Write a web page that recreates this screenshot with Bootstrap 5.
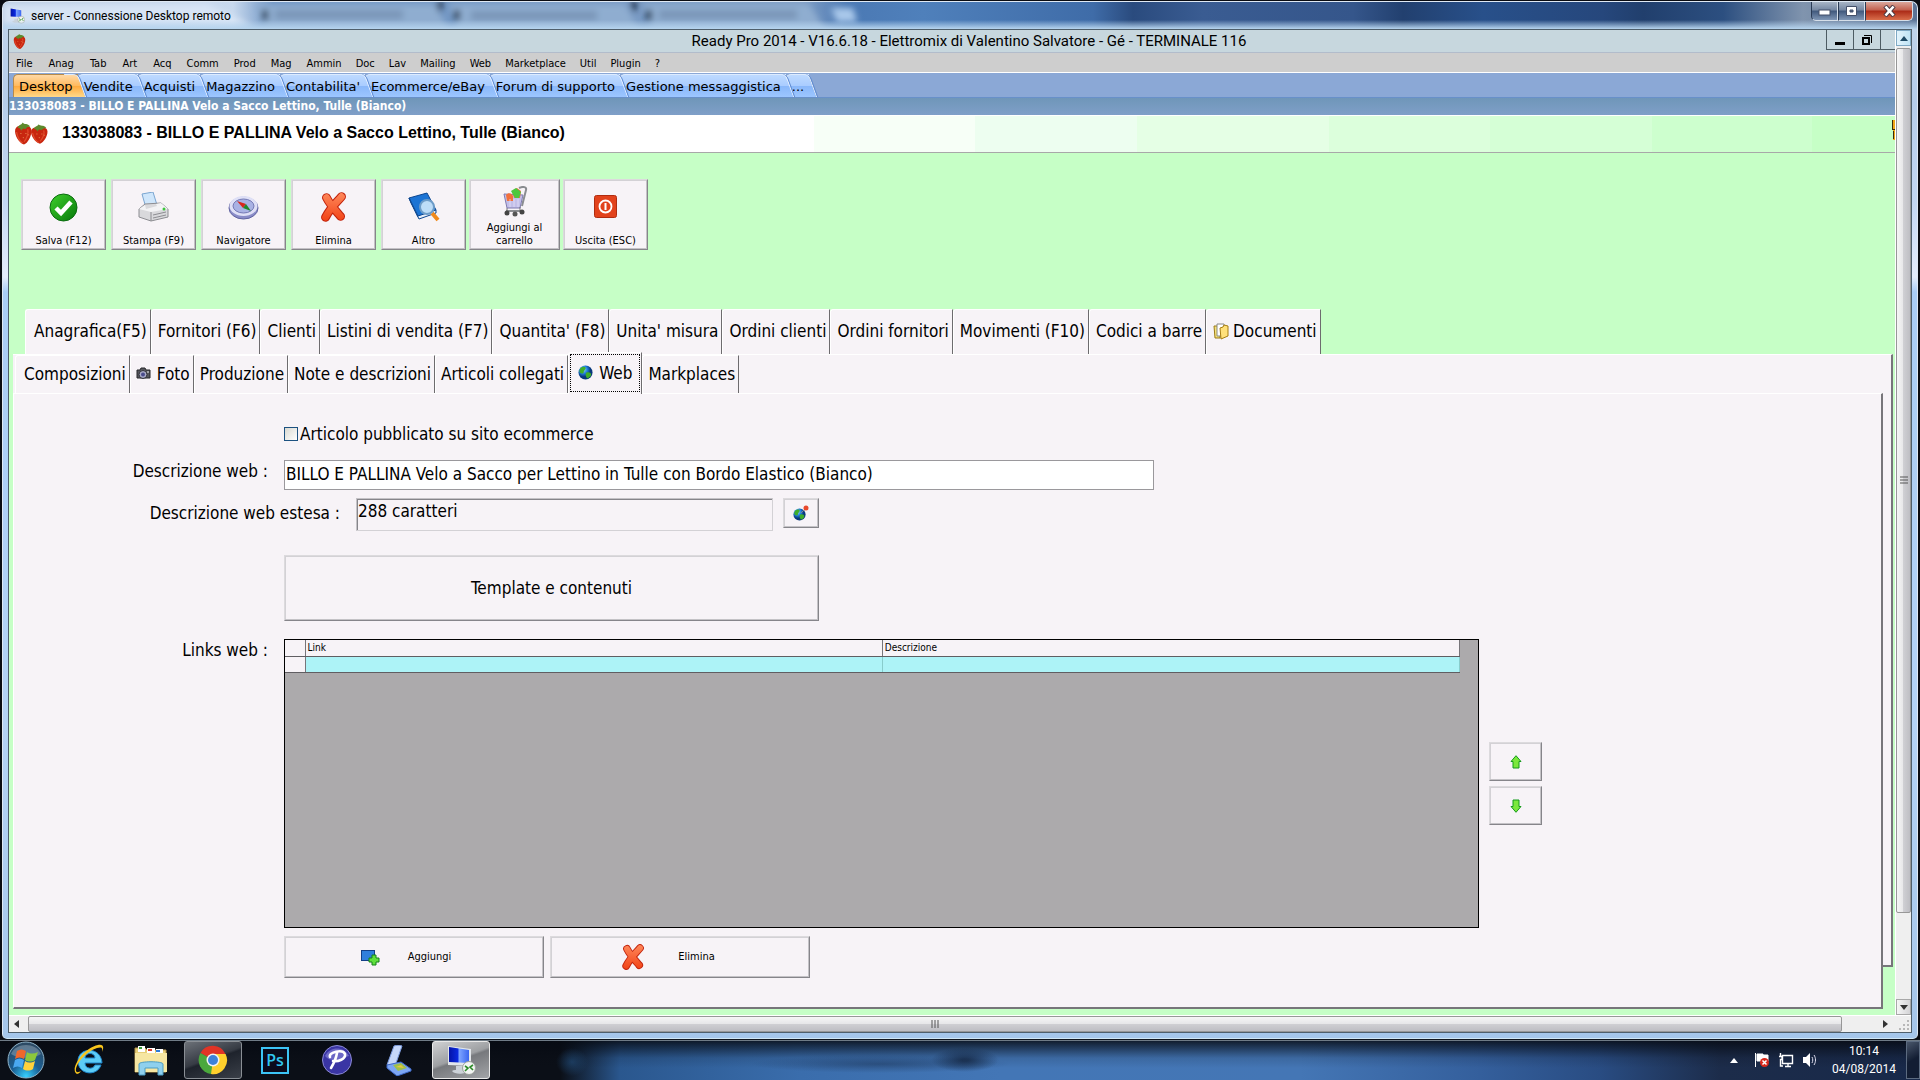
<!DOCTYPE html>
<html lang="it">
<head>
<meta charset="utf-8">
<meta name="viewport" content="width=device-width, initial-scale=1">
<title>server - Connessione Desktop remoto</title>
<link href="https://cdn.jsdelivr.net/npm/bootstrap@5.3.0/dist/css/bootstrap.min.css" rel="stylesheet">
<style>
:root{--tahoma:"DejaVu Sans Condensed","DejaVu Sans",sans-serif;--segoe:Roboto,"Open Sans",sans-serif;--face:#f7f3f7;--mint:#c6ffc6}
body{background:#0a0c12;font-family:var(--tahoma);font-size:17px;line-height:22px;color:#000;overflow:hidden}
button{font-family:inherit;color:#000}
svg{display:block;flex:none}
a{color:#000;text-decoration:none}

/* remote desktop window */
.rd-window{margin:1px 2px 0;padding:0 5px 5px;border:1px solid #dfe9f4;border-bottom-color:#cfe6f5;border-radius:7px 7px 5px 5px;background:linear-gradient(#c2d4ea 0,#b5cdea 100px,#c3d7f3 200px,#e4edfb 275px,#a9cdf6 290px,#b4d3f5 70%,#a5c6ea);min-height:0}
.rd-title{position:relative;height:27px;margin:0 -5px;padding-left:6px;border-radius:6px 6px 0 0;overflow:hidden;font-family:var(--segoe);font-size:12px;background:linear-gradient(90deg,#b9cbe2 0,#c8d9ee 230px,#6d94c4 270px,#7e9dc4 800px,#4b79b4 845px,#4f80bb 920px,#3f6ca8 1090px,#2a4b7e 1130px,#3a5c92 1200px,#35568b 1350px,#22406f 1400px,#28508a 1480px,#26477c 1600px,#213f6d 1640px,#2c4f80 1720px,#8094ae 1800px,#5b7396 100%)}
.rd-title::after{content:"";position:absolute;left:0;right:0;bottom:0;height:9px;background:linear-gradient(transparent,#b7d5ef)}
.rd-blur{position:absolute;left:0;top:0;width:100%;height:100%}
.rd-caption{position:relative;z-index:2;margin-left:6px}
.rd-buttons{position:absolute;top:0;right:4px;z-index:2}
.rd-buttons button{width:27px;height:19px;padding:0;border:1px solid #d6dfe9;border-top:0;border-left-color:#2a3b55;background:linear-gradient(#a7b4c6,#7487a2 45%,#40587c 50%,#7f96b5)}
.rd-buttons button:first-child{border-bottom-left-radius:5px}
.rd-buttons button:last-child{width:48px;border-bottom-right-radius:5px;background:linear-gradient(#dba79b,#c2604e 45%,#ab2a17 50%,#d96e4b)}
.rd-client{border:1px solid #4f5f6b;min-height:0;min-width:0}
.client-row{min-height:0}

/* application */
.app-title{height:23px;padding-left:34px;background:#c7d7de;border-bottom:1px solid #b2bccb;font-family:var(--segoe);position:relative}
.app-title h1{font-size:15px;line-height:22px;margin:0;font-weight:400}
.app-title .mdi{position:absolute;right:0;top:0}
.mdi button{width:27px;height:20px;padding:0;border:1px solid #4d5b62;border-width:0 0 1px 1px;background:#c7d7de}
.mdi button:last-child{width:15px}
.app-menu{height:20px;background:#cecece;border-bottom:1px solid #fff;font-size:11px;line-height:21px}
.app-menu a{padding:0 8px 0 7px}
.app-menu a:nth-child(-n+4){padding-right:9px}
.app-menu a:nth-child(n+9){padding-right:7px}
.area-tabs{height:25px;background:#8ba8d6;border-bottom:1px solid #6890c9;padding-left:4px;font-family:"DejaVu Sans",sans-serif;font-size:13px}
.area-tabs a{position:relative;height:23px;margin-top:1px;line-height:23px;padding:0 5px;border-left:1px solid #dcebff;border-top:1px solid #dcebff;border-top-left-radius:5px;background:linear-gradient(#bedaff,#a9ccff 50%,#8ab8fa 52%,#9cc6ff)}
.area-tabs a::after{content:"";position:absolute;z-index:-1;top:-1px;bottom:0;right:-4px;width:14px;border-top:1px solid #dcebff;border-right:1px solid #e8f2ff;box-shadow:1px 0 #5f8bd0;border-top-right-radius:5px;transform:skewX(20deg);background:inherit}
.area-tabs a:nth-child(1){z-index:9}.area-tabs a:nth-child(2){z-index:8}.area-tabs a:nth-child(3){z-index:7}.area-tabs a:nth-child(4){z-index:6}.area-tabs a:nth-child(5){z-index:5}.area-tabs a:nth-child(6){z-index:4}.area-tabs a:nth-child(7){z-index:3}.area-tabs a:nth-child(8){z-index:2}.area-tabs a:nth-child(9){z-index:1}
.area-tabs a.active{background:linear-gradient(#ffd9a6,#ffb95c 50%,#ffab3e 52%,#ffd98a);border-color:#b78a4a}
.doc-strip{height:17px;background:linear-gradient(#6f96b9,#7f9fc8);color:#fff;font-weight:700;font-size:12px;line-height:16px}
.doc-head{height:38px;border-top:1px solid #fff;border-bottom:1px solid #a8a8a8;background:linear-gradient(90deg,#fff 42.7%,#f7fff7 42.7% 51.2%,#edfef0 51.2% 59.8%,#e5ffe5 59.8% 70%,#dcffdc 70% 78.5%,#d5ffd6 78.5% 87.1%,#cdffce 87.1% 95.6%,#c6ffc6 95.6%);font-family:"Liberation Sans",Arial,sans-serif}
.doc-head h2{font-size:16px;line-height:20px;margin:0 0 2px;font-weight:700}
.work{background:var(--mint);padding-left:4px;min-height:0}
.bevel{background:var(--face);border:1px solid;border-color:#dcdadd #86858a #86858a #dcdadd;box-shadow:inset -1px -1px #c4c2c6,inset 1px 1px #d3d1d5;border-radius:0;padding:0}
.bevel:active{background:#ece8ec}
.tools{padding:26px 0 0 8px;gap:5px}
.tools .bevel{width:85px;height:71px;font-size:11px;line-height:13px;padding-bottom:2px}
.tools .bevel svg{margin-bottom:12px}
.tools .bevel.wide{width:91px;margin:0 -2px}
.tools .bevel.wide svg{margin-bottom:4px}
.tab-row a{display:flex;align-items:center;padding:0 3px 2px 6px;border-left:1px solid #fff;border-top:1px solid #fff;border-right:1px solid #6d6b6e;border-top-left-radius:3px;background:var(--face);white-space:nowrap}
.tab-row a:first-child{padding-left:8px}
.tabs-top{margin:59px 0 0 12px}
.tabs-top a{height:45px}
.page-outer{margin:0 2px 48px 0;background:var(--face);border-top:1px solid #fff;border-right:2px solid #77757a;border-bottom:2px solid #77757a;min-height:0}
.tabs-sub{padding-left:2px;height:38px}
.tabs-sub a{height:38px;gap:6px;padding-left:5px}
.tabs-sub a.active{position:relative;margin-top:-3px;height:42px;outline:1px dotted #000;outline-offset:-3px;padding:0 9px 2px 9px}
.page-inner{background:var(--face);margin:0 8px -44px 0;border-top:1px solid #fff;border-left:1px solid #fff;border-right:2px solid #77757a;border-bottom:2px solid #77757a;padding-top:26px}
.pub-row{height:28px}
.lab{flex:none;width:270px;padding-right:16px;text-align:right}
.lab.far{width:342px}
.tick{appearance:none;width:14px;height:14px;margin:0 2px 0 0;border:1px solid #1c5180;background:linear-gradient(135deg,#d9d9d2,#fff);border-radius:0}
.tick:checked{background:#1c5180}
.field{border-radius:0;font-family:inherit;font-size:17px;line-height:22px;color:#000}
.field-web{flex:0 1 870px;min-width:0;border:1px solid #9a989c;background:#fff;height:30px;padding:0 1px 2px}
.field-ext{flex:0 1 417px;min-width:0;height:33px;background:var(--face);border:1px solid;border-color:#c4c2c6 #d3d1d5 #d3d1d5 #c4c2c6;box-shadow:inset 1px 1px #86858a;padding:0 1px 7px}
.web-btn{width:36px;height:30px;margin-left:10px}
.template-row{margin-top:24px}
.links-row{margin-top:18px}
.gridbox{flex:0 1 1195px;height:289px;border:1px solid #000;background:#acaaac}
.gridbox table{width:calc(100% - 18px);table-layout:fixed;font-size:10px;line-height:14px;border-collapse:collapse}
.gridbox th,.gridbox td{height:16px;padding:0 2px;border-right:1px solid #77757a;border-bottom:1px solid #605e62;font-weight:400;text-align:left;background:var(--face)}
.gridbox .rowhead{width:20px}
.gridbox td.cellx{background:#adf3f7;border-right-color:#8cc}
.movers{margin:103px 0 0 10px;gap:5px}
.movers .bevel{width:53px;height:39px}
.big{width:535px;height:66px}
.act{width:260px;height:42px;font-size:11px;margin-right:6px}

/* scroll bars */
.vscroll{width:16px;background:#efefef;border-left:1px solid #fff}
.vscroll button,.hscroll button{border:0;padding:0;background:none;width:15px;height:16px}
.vscroll .hot{border:1px solid #7fa9c4;background:linear-gradient(90deg,#e3f4fc,#bfe3f4)}
.vscroll .low{border:1px solid #a8a8a8;background:linear-gradient(90deg,#f6f6f6,#d4d4d6)}
.vthumb{flex:864 1 0;margin-top:2px;border:1px solid #979797;border-radius:2px;background:linear-gradient(90deg,#f6f6f6,#e6e6e8 50%,#cfcfd3 50%,#bebec3)}
.vrest{flex:86 1 0}
.hscroll{height:17px;background:#efefef;border-top:1px solid #fff}
.hthumb{flex:1815 1 0;border:1px solid #979797;border-radius:2px;background:linear-gradient(#f6f6f6,#e6e6e8 50%,#cfcfd3 50%,#bebec3)}
.hrest{flex:36 1 0}

/* taskbar */
.taskbar{height:41px;border-top:1px solid #10151c;background:radial-gradient(ellipse 34px 12px at 965px 20px,#0d1a30aa 10%,transparent),radial-gradient(ellipse 130px 9px at 880px 24px,#1c355988,transparent),radial-gradient(ellipse 16px 14px at 572px 22px,#23507f99,transparent),linear-gradient(#060a12dd,#060a1222 45%,transparent 70%),linear-gradient(90deg,#0b0f17 560px,#2a578e 620px,#3a6dac 800px,#4376b6 1000px,#4476b5 1300px,#345f9c 1480px,#294c82 1600px,#1c2c4a 1720px,#18294a)}
.taskbar nav{border-top:1px solid #6f7b86}
.taskbar a,.taskbar button{display:flex;align-items:center;justify-content:center}
.tb{width:62px;height:38px}
.tb-start{width:60px}
.tb-on{width:58px;margin:0 2px;border:1px solid #8a8f95;border-radius:3px;background:linear-gradient(160deg,#6c7178,#363b44 45%,#1e232c 50%,#3a3f48)}
.tb-now{background:linear-gradient(160deg,#d0d1d3,#9d9fa2 45%,#77797d 50%,#a2a4a7);border-color:#e9e9e9}
.ps-logo{width:28px;height:27px;border:2px solid #3cc4f6;background:#0b0b1c;color:#31c5f0;font:600 16px/22px "Open Sans",sans-serif;text-align:center}
.clock{width:84px;font-family:var(--segoe);font-size:12px;line-height:18px;color:#fff;text-align:center}
.peek{width:14px;height:38px;padding:0;border:1px solid #5c6b80;background:linear-gradient(150deg,#49566a,#121d33 50%)}
</style>
</head>
<body class="d-flex flex-column vh-100">
<svg width="0" height="0" class="position-absolute" aria-hidden="true">
  <defs>
    <linearGradient id="gRed" gradientUnits="userSpaceOnUse" x1="0" y1="0" x2="0" y2="34"><stop offset="0" stop-color="#ff8a5c"/><stop offset="1" stop-color="#f03c10"/></linearGradient>
    <linearGradient id="gGreen" x1="0" y1="0" x2="1" y2="1"><stop offset="0" stop-color="#3fd02c"/><stop offset="1" stop-color="#06780a"/></linearGradient>
    <radialGradient id="gGlobe" cx=".35" cy=".3"><stop offset="0" stop-color="#8fd8ff"/><stop offset=".6" stop-color="#1c78d8"/><stop offset="1" stop-color="#08387c"/></radialGradient>
    <linearGradient id="gScreen" x1="0" y1="0" x2="1" y2="0"><stop offset="0" stop-color="#0414a8"/><stop offset=".45" stop-color="#0a2ae0"/><stop offset=".5" stop-color="#7fa6ff"/><stop offset="1" stop-color="#3a66f0"/></linearGradient>
    <symbol id="berry" viewBox="0 0 16 18" preserveAspectRatio="none"><path d="M1 6c1-3 5-3 7-2 3-1 6 0 6 3 0 4-3 9-6 10C4 16 0 10 1 6z" fill="#c8260f"/><path d="M2 8c1 4 3 7 5 8M11 6c1 3-1 7-3 9" stroke="#e04a2c" fill="none"/><path d="M3 5c1-3 3-2 4-4 1 2 4 0 6 3-2 0-3 1-4 2-1-1-2-1-3 1-1-2-2-2-3-2z" fill="#5d8a2c"/><path d="M5 9h1M9 9h1M7 12h1M11 10h1" stroke="#e88a50" stroke-width=".6"/></symbol>
    <symbol id="cross" viewBox="0 0 30 32"><g fill="none" stroke-linecap="round"><path d="M7 6c4 8 9 13 15 20M23 5C17 12 11 17 6 27" stroke="#c2230c" stroke-width="9.500"/><path d="M7 6c4 8 9 13 15 20M23 5C17 12 11 17 6 27" stroke="url(#gRed)" stroke-width="7.200"/></g></symbol>
    <symbol id="globe" viewBox="0 0 16 16"><circle cx="8" cy="8" r="7.5" fill="url(#gGlobe)"/><path d="M3 3c3-2 6-1 5 1s-2 2-2 4-3 1-4 0 0-4 1-5zM9 8c2-1 5 0 5 2s-3 4-4 4-3-4-1-6z" fill="#3fae2a"/></symbol>
    <symbol id="remote" viewBox="0 0 30 30"><path d="M2 1 25 4v17L2 20z" fill="#e2e6ea"/><path d="M3 2 23 5v13L3 17z" fill="url(#gScreen)"/><path d="M10 21h7v4h-7zM6 26c3-2 12-2 15 0s-12 5-15 0z" fill="#ccd2d8"/><circle cx="23" cy="23" r="6.5" fill="#f2f4f2" stroke="#9aa09a"/><path d="m19 21 3 2-3 3M27 20l-3 2 3 3" stroke="#2b8a26" stroke-width="1.6" fill="none"/></symbol>
  </defs>
</svg>

<main class="rd-window d-flex flex-column flex-grow-1">
  <header class="rd-title d-flex align-items-center flex-shrink-0">
    <svg class="rd-blur" preserveAspectRatio="none" aria-hidden="true"><defs><filter id="soft" x="-20%" y="-50%" width="140%" height="200%"><feGaussianBlur stdDeviation="3"/></filter></defs>
      <g filter="url(#soft)"><path d="M0 2h205l45 22H0z" fill="#dce8f7" opacity=".8"/><path d="M252 2h180l14 26H262zM446 2h176l14 26H456zM640 2h166l16 26H650z" fill="#8fadd0"/><path d="M433 0h8l-4 12zM627 0h8l-4 12z" fill="#15253c"/><path d="M276 12h120v1H276zM472 13h118v1H472zM660 12h130v1H660z" stroke="#647f9f" stroke-width="8" opacity=".5"/><path d="M262 8v10M454 8v10M646 8v10" stroke="#1f3450" stroke-width="6"/><path d="M828 6h22l4 14h-20z" fill="#a9c8ea"/></g></svg>
    <svg class="position-relative" width="16" height="17"><use href="#remote"/></svg>
    <span class="rd-caption">server - Connessione Desktop remoto</span>
    <div class="rd-buttons d-flex">
      <button type="button" aria-label="Riduci a icona"><svg class="mx-auto" width="13" height="12"><rect x="1" y="5" width="11" height="5" fill="#fff" stroke="#44506a"/></svg></button>
      <button type="button" aria-label="Ingrandisci"><svg class="mx-auto" width="13" height="12"><path d="M1.500 1.500h10v9h-10zM5 5h3v2H5z" fill="#fff" fill-rule="evenodd" stroke="#44506a"/></svg></button>
      <button type="button" aria-label="Chiudi"><svg class="mx-auto" width="13" height="12"><path d="m2 1 4.500 5L11 1M2 11l4.500-5 4.500 5" stroke="#4b3a44" stroke-width="4.500" fill="none"/><path d="m2.500 1.500 4 4.500 4-4.500M2.500 10.500l4-4.500 4 4.500" stroke="#fff" stroke-width="2.600" fill="none"/></svg></button>
    </div>
  </header>

  <div class="rd-client d-flex flex-column flex-grow-1">
    <div class="client-row d-flex flex-grow-1">
      <div class="d-flex flex-column flex-grow-1 overflow-hidden">
        <div class="app-title d-flex align-items-center justify-content-center flex-shrink-0">
          <svg class="position-absolute start-0 ms-1" width="14" height="17"><use href="#berry"/></svg>
          <h1>Ready Pro 2014 - V16.6.18 - Elettromix di Valentino Salvatore - Gé - TERMINALE 116</h1>
          <div class="mdi d-flex">
            <button type="button" aria-label="Riduci"><svg class="mx-auto" width="12" height="12"><path d="M1 8h10v3H1z"/></svg></button>
            <button type="button" aria-label="Ripristina"><svg class="mx-auto" width="12" height="12"><path d="M2 4h6v6H2z" fill="none" stroke="#000" stroke-width="2"/><path d="M3 1.500h7.500V9" fill="none" stroke="#000"/></svg></button>
            <button type="button" aria-label="Chiudi scheda"></button>
          </div>
        </div>
        <nav class="app-menu d-flex flex-shrink-0" aria-label="Menu">
          <a href="#">File</a><a href="#">Anag</a><a href="#">Tab</a><a href="#">Art</a><a href="#">Acq</a><a href="#">Comm</a><a href="#">Prod</a><a href="#">Mag</a><a href="#">Ammin</a><a href="#">Doc</a><a href="#">Lav</a><a href="#">Mailing</a><a href="#">Web</a><a href="#">Marketplace</a><a href="#">Util</a><a href="#">Plugin</a><a href="#">?</a>
        </nav>
        <nav class="area-tabs d-flex flex-shrink-0" aria-label="Aree">
          <a class="active" href="#">Desktop</a><a href="#">Vendite</a><a href="#">Acquisti</a><a href="#">Magazzino</a><a href="#">Contabilita'</a><a href="#">Ecommerce/eBay</a><a href="#">Forum di supporto</a><a href="#">Gestione messaggistica</a><a href="#">...</a>
        </nav>
        <div class="doc-strip flex-shrink-0">133038083 - BILLO E PALLINA Velo a Sacco Lettino, Tulle (Bianco)</div>
        <div class="doc-head d-flex align-items-center flex-shrink-0">
          <svg class="ms-1" width="37" height="26"><use href="#berry" x="1" y="0" width="20" height="25"/><use href="#berry" x="17" y="2" width="20" height="22"/></svg>
          <h2 class="ms-2 ps-1 flex-grow-1">133038083 - BILLO E PALLINA Velo a Sacco Lettino, Tulle (Bianco)</h2>
          <svg class="mb-2" width="3" height="22"><path d="M0 1h3v20H1V11H0z" fill="#f0a818"/><path d="M.5 1v9M1.500 12v8M0 10.500h3" stroke="#3a2c08"/></svg>
        </div>

        <section class="work d-flex flex-column flex-grow-1">
          <div class="tools d-flex flex-shrink-0">
            <button type="button" class="bevel d-flex flex-column align-items-center justify-content-end"><svg width="29" height="29"><circle cx="14.500" cy="14.500" r="13.500" fill="url(#gGreen)" stroke="#0b6b10"/><path d="m7 15 5 5 10-11" stroke="#fff" stroke-width="4.500" fill="none"/></svg>Salva (F12)</button>
            <button type="button" class="bevel d-flex flex-column align-items-center justify-content-end"><svg width="31" height="30"><path d="m4 2 11-2 4 13-11 3z" fill="#cfe6fb" stroke="#7aa5d0"/><path d="m1 17 6-5 16-1 7 6v8l-17 4-12-4z" fill="#d9d9dc" stroke="#8d8d92"/><path d="m1 17 12 3 17-3-7-6-5 1 1 2-11 3-1-4z" fill="#f3f3f5"/><path d="M13 20v9M15 23l13-3M15 26l13-3" stroke="#8d8d92"/><circle cx="26" cy="17" r="1.500" fill="#3cc43c"/></svg>Stampa (F9)</button>
            <button type="button" class="bevel d-flex flex-column align-items-center justify-content-end"><svg width="31" height="29"><ellipse cx="15.500" cy="15" rx="14.500" ry="11" fill="#8a8cc8" stroke="#6063a0"/><ellipse cx="15.500" cy="13" rx="14" ry="10" fill="#dfe0f6"/><ellipse cx="15.500" cy="13" rx="10.500" ry="7" fill="#a9b2e4" stroke="#7478b4"/><path d="m9 8 9 3-3 4z" fill="#d8281c"/><path d="m23 18-8-3 3-4z" fill="#1f8a2c"/></svg>Navigatore</button>
            <button type="button" class="bevel d-flex flex-column align-items-center justify-content-end"><svg width="30" height="30"><use href="#cross"/></svg>Elimina</button>
            <button type="button" class="bevel d-flex flex-column align-items-center justify-content-end"><svg width="32" height="30"><path d="m1 6 18-5 9 17-18 7z" fill="#1c74d4" stroke="#0c4690"/><path d="m1 6 2 5 8 16 17-6v-3l-18 6z" fill="#e8eef8" stroke="#0c4690"/><path d="m24 21 6 7" stroke="#f08a1c" stroke-width="4"/><circle cx="19" cy="15" r="7" fill="#cfe9fc" fill-opacity=".9" stroke="#6d9cc8" stroke-width="2"/></svg>Altro</button>
            <button type="button" class="bevel wide d-flex flex-column align-items-center justify-content-end"><svg width="26" height="31"><path d="M17 2c4-2 8-1 7 2l-4 16M4 25h15" stroke="#8a8c90" stroke-width="2" fill="none"/><path d="m2 8 19 1-3 13H5z" fill="#c3bfe8" stroke="#7f7bb0"/><path d="M4 9c2-3 6-2 7 1v5H5zM10 5l5-3 4 3-1 7h-6z" fill="#f2703c"/><path d="m9 5 5-3 5 4-2 6h-4z" fill="#4cc83c"/><path d="M8 13v8M12 13v8M16 13v8" stroke="#e8e6fa" stroke-width=".7"/><path d="M5 22v3M18 21v4" stroke="#777"/><circle cx="5" cy="27" r="2.500" fill="#444"/><circle cx="13" cy="28" r="2.500" fill="#555"/><circle cx="20" cy="26" r="2.500" fill="#444"/></svg><span>Aggiungi al<br>carrello</span></button>
            <button type="button" class="bevel d-flex flex-column align-items-center justify-content-end"><svg width="23" height="28"><rect x=".5" y="1.500" width="22" height="22" rx="2" fill="#e2421c" stroke="#b02c10"/><circle cx="11.500" cy="12.500" r="6" stroke="#fff" stroke-width="1.800" fill="none"/><path d="M11.500 9v7" stroke="#fff" stroke-width="2"/></svg>Uscita (ESC)</button>
          </div>

          <nav class="tab-row tabs-top d-flex flex-shrink-0" aria-label="Schede articolo">
            <a href="#">Anagrafica(F5)</a><a href="#">Fornitori (F6)</a><a href="#">Clienti</a><a href="#">Listini di vendita (F7)</a><a href="#">Quantita' (F8)</a><a href="#">Unita' misura</a><a href="#">Ordini clienti</a><a href="#">Ordini fornitori</a><a href="#">Movimenti (F10)</a><a href="#">Codici a barre</a><a href="#"><svg class="me-1" width="16" height="17"><path d="M1 3h5l1 3v9H2z" fill="#f5e27a" stroke="#9b7a16"/><path d="M4 1h7v12H4z" fill="#fff" stroke="#888"/><path d="m7 5 3-1 1-2 4 1v10l-7 3z" fill="#ffe07a" stroke="#a67c10"/></svg>Documenti</a>
          </nav>

          <div class="page-outer d-flex flex-column flex-grow-1">
            <nav class="tab-row tabs-sub d-flex flex-shrink-0" aria-label="Sottoschede">
              <a href="#">Composizioni</a><a href="#"><svg width="15" height="13"><path d="M1 3h3l1-2h4l1 2h4v8H1z" fill="#55565c" stroke="#26272b"/><circle cx="7" cy="7.500" r="4" fill="#a9aac8" stroke="#33343a"/><circle cx="7" cy="7.500" r="2" fill="#4a4c8c"/><path d="M11 5h2" stroke="#eee"/></svg>Foto</a><a href="#">Produzione</a><a href="#">Note e descrizioni</a><a href="#">Articoli collegati</a><a class="active" href="#"><svg width="15" height="15"><use href="#globe"/></svg>Web</a><a href="#">Markplaces</a>
            </nav>
            <form class="page-inner flex-grow-1" onsubmit="return false">
              <div class="pub-row d-flex align-items-center">
                <span class="lab"></span>
                <input class="tick" type="checkbox" id="pub"><label for="pub">Articolo pubblicato su sito ecommerce</label>
              </div>
              <div class="d-flex align-items-start mt-2 pt-1">
                <label class="lab" for="dweb">Descrizione web :</label>
                <input class="field field-web" id="dweb" type="text" value="BILLO E PALLINA Velo a Sacco per Lettino in Tulle con Bordo Elastico (Bianco)">
              </div>
              <div class="d-flex align-items-start mt-2">
                <label class="lab far pt-1" for="dext">Descrizione web estesa :</label>
                <input class="field field-ext" id="dext" type="text" readonly value="288 caratteri">
                <button type="button" class="bevel web-btn d-flex align-items-center justify-content-center" aria-label="Modifica descrizione"><svg width="16" height="16"><use href="#globe" x="0" y="3" width="13" height="13"/><path d="m8 8 4-4" stroke="#888"/><circle cx="13" cy="3" r="2.500" fill="#e8482c"/></svg></button>
              </div>
              <div class="template-row d-flex">
                <span class="lab"></span>
                <button type="button" class="bevel big">Template e contenuti</button>
              </div>
              <div class="links-row d-flex align-items-start">
                <span class="lab">Links web :</span>
                <div class="gridbox">
                  <table aria-label="Links web">
                    <colgroup><col class="rowhead"><col><col></colgroup>
                    <thead><tr><th></th><th>Link</th><th>Descrizione</th></tr></thead>
                    <tbody><tr><td></td><td class="cellx"></td><td class="cellx"></td></tr></tbody>
                  </table>
                </div>
                <div class="movers d-flex flex-column">
                  <button type="button" class="bevel" aria-label="Sposta su"><svg class="mx-auto" width="12" height="14"><path d="m6 .7 5 5.800H9V13H3V6.500H1z" fill="#7be83c" stroke="#159a1c"/></svg></button>
                  <button type="button" class="bevel" aria-label="Sposta giù"><svg class="mx-auto" width="12" height="14"><path d="m6 13.300 5-5.800H9V1H3v6.500H1z" fill="#7be83c" stroke="#159a1c"/></svg></button>
                </div>
              </div>
              <div class="d-flex mt-2">
                <span class="lab"></span>
                <button type="button" class="bevel act pe-3 d-flex align-items-center justify-content-center"><svg class="me-4" width="19" height="17"><rect x=".5" y="1.500" width="13" height="10" fill="#2f7fdc" stroke="#123f86"/><path d="M11 6h4v3h3v4h-3v3h-4v-3H8V9h3z" fill="#5fe03c" stroke="#14801a"/></svg><span class="ms-1">Aggiungi</span></button>
                <button type="button" class="bevel act pe-4 d-flex align-items-center justify-content-center"><svg class="me-4" width="25" height="26"><use href="#cross"/></svg><span class="ms-2">Elimina</span></button>
              </div>
            </form>
          </div>
        </section>
      </div>
      <div class="vscroll d-flex flex-column flex-shrink-0">
        <button type="button" class="hot" aria-label="Scorri su"><svg class="mx-auto" width="8" height="5"><path d="M0 5 4 0l4 5z" fill="#1f4b66"/></svg></button>
        <div class="vthumb d-flex align-items-center justify-content-center"><svg width="8" height="9"><path d="M0 1h8M0 4h8M0 7h8" stroke="#555"/></svg></div>
        <div class="vrest"></div>
        <button type="button" class="low" aria-label="Scorri giù"><svg class="mx-auto" width="8" height="5"><path d="m0 0 4 5 4-5z" fill="#333"/></svg></button>
      </div>
    </div>
    <div class="hscroll d-flex flex-shrink-0">
      <button type="button" class="me-1" aria-label="Scorri a sinistra"><svg class="mx-auto" width="5" height="8"><path d="M5 0 0 4l5 4z" fill="#333"/></svg></button>
      <div class="hthumb d-flex align-items-center justify-content-center"><svg width="9" height="8"><path d="M1 0v8M4 0v8M7 0v8" stroke="#555"/></svg></div>
      <div class="hrest"></div>
      <button type="button" aria-label="Scorri a destra"><svg class="mx-auto" width="5" height="8"><path d="m0 0 5 4-5 4z" fill="#333"/></svg></button>
      <svg class="ms-1" width="14" height="15"><path d="M10 4h2v2h-2zM10 8h2v2h-2zM6 8h2v2H6zM10 12h2v2h-2zM6 12h2v2H6zM2 12h2v2H2z" fill="#b8b8b8"/></svg>
    </div>
  </div>
</main>

<footer class="taskbar flex-shrink-0">
  <nav class="d-flex align-items-center" aria-label="Barra delle applicazioni">
    <a href="#" class="tb tb-start" aria-label="Start"><svg class="me-2" width="38" height="38" viewBox="0 0 38 38"><defs><radialGradient id="orb" cx=".5" cy=".95" r=".9"><stop offset="0" stop-color="#35d0ff"/><stop offset=".45" stop-color="#1a5f94"/><stop offset="1" stop-color="#2c4a64"/></radialGradient></defs><circle cx="19" cy="19" r="18" fill="url(#orb)" stroke="#8fb3c8"/><path d="M4 13c5-12 25-12 30 0-8 5-22 5-30 0z" fill="#fff" opacity=".25"/><path d="M10 10c3-2 6-2 9 0l-2 8c-3-2-6-2-9 0z" fill="#f0682c"/><path d="M20 11c3 2 7 2 11 0l-3 8c-3 2-7 2-10 0z" fill="#8cc83c"/><path d="M8 19c3-2 6-2 9 0l-2 8c-3-2-6-2-9 0z" fill="#4aa8f0"/><path d="M18 20c3 2 6 2 10 0l-2 8c-3 2-7 2-10 0z" fill="#ffd23c"/></svg></a>
    <a href="#" class="tb" aria-label="Internet Explorer"><svg class="me-1" width="32" height="32" viewBox="0 0 32 32"><path d="M29 19H12c0 6 8 7 10 2h6C24 33 5 31 5 17S28 2 29 19zm-7-5c0-6-10-6-10 0z" fill="#5cccf6" stroke="#1f86cc"/><path d="M4 30C-4 26 10 4 25 1c6-1 6 3 4 7 1-5-1-5-5-4C14 7 2 20 3 27c1 2 3 1 5 0-1 2-3 3-4 3z" fill="#f8c51c"/></svg></a>
    <a href="#" class="tb" aria-label="Esplora risorse"><svg class="me-1" width="34" height="32" viewBox="0 0 34 32"><path d="M1 4h10l2 2h19v22H1z" fill="#e8cf78" stroke="#b2934a"/><path d="M4 2h7v6H4zM13 4h8v5h-8zM22 5h7v5h-7z" fill="#fff"/><path d="M5 3h3v2H5z" fill="#3a9b3c"/><path d="M14 5h4v2h-4z" fill="#d83c2c"/><path d="M22 6h4v2h-4z" fill="#2c7ad8"/><path d="M1 9h32v19H1z" fill="#f6e6a2"/><path d="M5 31V20c0-3 24-3 24 0v11h-5v-7H11v7z" fill="#8fd0ee" stroke="#4a9cc4"/></svg></a>
    <a href="#" class="tb-on tb ms-0" aria-label="Google Chrome"><svg width="30" height="30" viewBox="0 0 30 30"><path d="M15 15 2.500 8a14 14 0 0 1 25 1z" fill="#e03426"/><path d="M15 15 2.500 8A14 14 0 0 0 13 29l6-10z" fill="#4aa83c"/><path d="M15 15 13 29a14 14 0 0 0 14.600-20H15z" fill="#ffd02c"/><circle cx="15" cy="15" r="6.500" fill="#f4f4f4"/><circle cx="15" cy="15" r="5" fill="#3e82d8"/></svg></a>
    <a href="#" class="tb" aria-label="Photoshop"><span class="ps-logo">Ps</span></a>
    <a href="#" class="tb" aria-label="P"><svg width="30" height="30" viewBox="0 0 30 30"><circle cx="15" cy="15" r="14.500" fill="#3a35a4" stroke="#8c8ad4"/><path d="M3 11c5-10 19-10 24 0-7 2-17 8-24 0z" fill="#8d8bdc" opacity=".6"/><path d="M8 12c-2-5 13-8 15-3 1 5-7 8-12 7M15 8c-1 6-3 10-6 15" stroke="#fff" stroke-width="2.600" fill="none" stroke-linecap="round"/></svg></a>
    <a href="#" class="tb" aria-label="Scanner"><svg width="26" height="31" viewBox="0 0 26 31"><path d="M8 1c3-1 6-1 8 0l-7 20-8-1z" fill="#c6d8fa" stroke="#7c9ce0"/><path d="m1 20 14-3 10 7v2l-14 5-10-8z" fill="#7ca6f4" stroke="#3c68c8"/><path d="m7 20 8-2 6 5-9 3z" fill="#9dbf4c"/><path d="m10 22 5-2 3 3z" fill="#e8c83c"/></svg></a>
    <a href="#" class="tb-on tb-now tb" aria-label="Connessione Desktop remoto"><svg width="30" height="30"><use href="#remote"/></svg></a>
    <div class="d-flex align-items-center ms-auto">
      <svg class="me-3" width="8" height="5"><path d="M0 5 4 0l4 5z" fill="#fff"/></svg>
      <svg class="me-2" width="16" height="16"><path d="M1.500 1v14M3 2h6v1h5v6H3z" fill="#fff" stroke="#fff"/><circle cx="10.500" cy="10.500" r="4.500" fill="#d8281c"/><path d="m8.500 8.500 4 4m0-4-4 4" stroke="#fff" stroke-width="1.500"/></svg>
      <svg class="me-2" width="16" height="16"><path d="M4.500 3.500h10v8h-10zM7 14.500h6M10 12v2M2.500 1v3M1 4.500h3v3H2.500V14H5" fill="none" stroke="#fff" stroke-width="1.400"/></svg>
      <svg class="me-1" width="16" height="16"><path d="M1 5h3l4-4v14l-4-4H1z" fill="#fff"/><path d="M10 5c1 2 1 4 0 6M12 3c2 3 2 7 0 10" stroke="#dde" fill="none"/></svg>
      <div class="clock"><div>10:14</div><div>04/08/2014</div></div>
      <button type="button" class="peek" aria-label="Mostra desktop"></button>
    </div>
  </nav>
</footer>
<script src="https://cdn.jsdelivr.net/npm/bootstrap@5.3.0/dist/js/bootstrap.bundle.min.js"></script>
</body>
</html>
